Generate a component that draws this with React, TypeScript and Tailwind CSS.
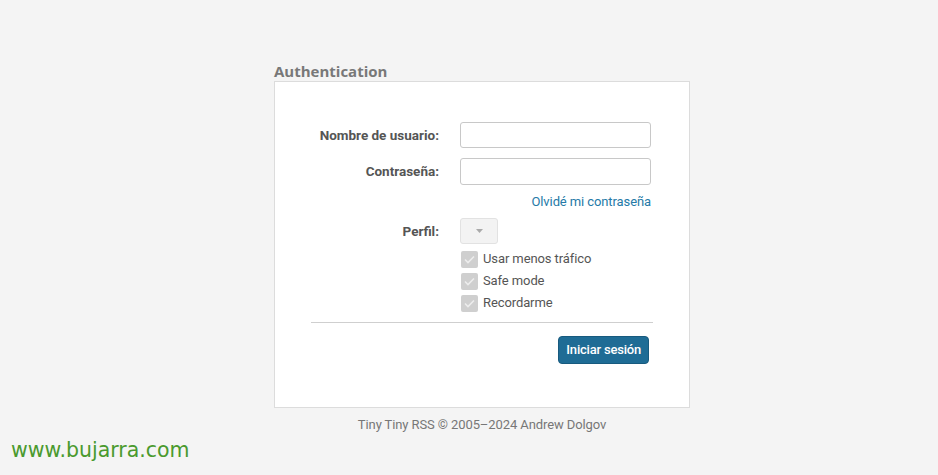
import { FC } from 'react'

const Check: FC<{ label: string }> = ({ label }) => (
  <label className="flex items-center gap-[5px] h-[22px]">
    <span className="w-[17px] h-[17px] rounded-[2px] bg-[#cfcfcf] flex items-center justify-center">
      <svg width="11" height="9" viewBox="0 0 11 9" fill="none">
        <path d="M1 4.5 L4 7.5 L10 1.5" stroke="#ededed" strokeWidth="1.6" />
      </svg>
    </span>
    <span className="text-[13px] text-[#555] tracking-[-0.1px]">{label}</span>
  </label>
)

const App: FC = () => {
  return (
    <div
      className="min-h-[475px] bg-[#f4f4f4] flex flex-col items-center pt-[62px] pl-[26px] relative"
      style={{ fontFamily: 'Roboto, "Liberation Sans", sans-serif' }}
    >
      <div className="w-[416px]">
        {/* Title */}
        <h2
          className="text-[15px] font-bold text-[#787878] leading-[19px] mb-0"
          style={{ fontFamily: '"Open Sans", "DejaVu Sans", sans-serif' }}
        >
          Authentication
        </h2>

        {/* Panel */}
        <div className="bg-white border border-[#dcdcdc] pt-[40px] pb-[43px] px-[36px]">
          <div className="grid grid-cols-[128px_191px] gap-x-[21px] items-center">
            <div className="text-right text-[13.5px] font-bold text-[#555]">Nombre de usuario:</div>
            <input className="h-[26px] border border-[#c8c8c8] rounded-[3px] bg-white" />

            <div className="text-right text-[13.5px] font-bold text-[#555] mt-[10px]">Contraseña:</div>
            <input type="password" className="h-[27px] border border-[#c8c8c8] rounded-[3px] bg-white mt-[10px]" />

            <div />
            <div className="text-right text-[13px] text-[#257aa7] h-[33px] leading-[33px] tracking-[-0.1px]">
              Olvidé mi contraseña
            </div>

            <div className="text-right text-[13.5px] font-bold text-[#555]">Perfil:</div>
            <div className="h-[26px] w-[38px] border border-[#e2e2e2] rounded-[3px] bg-[#f3f3f3] flex items-center justify-center">
              <svg width="7" height="4" viewBox="0 0 7 4">
                <path d="M0 0 L7 0 L3.5 4 Z" fill="#aaa" />
              </svg>
            </div>

            <div />
            <div className="pt-[4px] pl-[1px]">
              <Check label="Usar menos tráfico" />
              <Check label="Safe mode" />
              <Check label="Recordarme" />
            </div>
          </div>

          <div className="border-t border-[#cfcfcf] mt-[8px]" />

          <div className="flex justify-end mt-[13px] mr-[4px]">
            <button className="h-[28px] px-[7px] rounded-[4px] bg-[#1f6c95] border border-[#185a7e] text-white text-[13px] font-medium tracking-[-0.2px]">
              Iniciar sesión
            </button>
          </div>
        </div>

        {/* Footer */}
        <div className="text-center text-[13px] text-[#777] mt-[7px] tracking-[-0.1px]">
          Tiny Tiny RSS © 2005–2024 Andrew Dolgov
        </div>
      </div>

      {/* Watermark */}
      <div
        className="absolute left-[11px] bottom-[9px] text-[20.5px] text-[#4a9a2e]"
        style={{ fontFamily: '"DejaVu Sans", Verdana, sans-serif' }}
      >
        www.bujarra.com
      </div>
    </div>
  )
}

export default App
